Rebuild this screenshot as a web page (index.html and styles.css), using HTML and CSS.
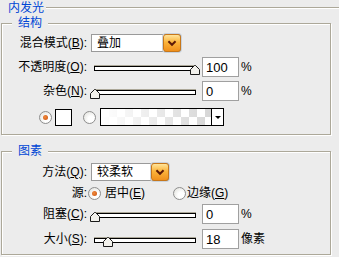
FILE: index.html
```html
<!DOCTYPE html>
<html lang="zh-CN">
<head>
  <meta charset="UTF-8" />
  <title>内发光</title>
  <link rel="stylesheet" href="styles.css">
</head>
<body>
  <div class="panel">
    <div class="panel-title">
      <span>内发光</span>
      <div class="rule"></div>
    </div>

    <fieldset class="group group-structure">
      <legend>结构</legend>

      <div class="row">
        <label class="field-label">混合模式(<u>B</u>):</label>
        <div class="select select-blend">
          <span class="select-text">叠加</span>
          <span class="select-btn">
            <svg width="18" height="18" viewBox="0 0 18 18"><path d="M5 7 L9 11 L13 7" fill="none" stroke="#5c1a08" stroke-width="2.2"/></svg>
          </span>
        </div>
      </div>

      <div class="row">
        <label class="field-label">不透明度(<u>O</u>):</label>
        <div class="slider">
          <div class="track"></div>
          <svg class="thumb" style="left: 100px" width="10" height="10" viewBox="0 0 10 10"><polygon points="0.5,9.5 0.5,4.5 4.5,0.5 5.5,0.5 9.5,4.5 9.5,9.5" fill="#f2f1ec" stroke="#1a1a1a"/></svg>
        </div>
        <input type="text" class="num" value="100">
        <span class="unit">%</span>
      </div>

      <div class="row">
        <label class="field-label">杂色(<u>N</u>):</label>
        <div class="slider">
          <div class="track"></div>
          <svg class="thumb" style="left: 0px" width="10" height="10" viewBox="0 0 10 10"><polygon points="0.5,9.5 0.5,4.5 4.5,0.5 5.5,0.5 9.5,4.5 9.5,9.5" fill="#f2f1ec" stroke="#1a1a1a"/></svg>
        </div>
        <input type="text" class="num" value="0">
        <span class="unit">%</span>
      </div>

      <div class="row row-colors">
        <span class="radio checked"></span>
        <span class="swatch"></span>
        <span class="radio radio-gap"></span>
        <div class="gradient">
          <div class="gradient-fill"></div>
          <span class="gradient-btn"></span>
        </div>
      </div>
    </fieldset>

    <fieldset class="group group-elements">
      <legend>图素</legend>

      <div class="row">
        <label class="field-label">方法(<u>Q</u>):</label>
        <div class="select select-method">
          <span class="select-text">较柔软</span>
          <span class="select-btn">
            <svg width="18" height="18" viewBox="0 0 18 18"><path d="M5 7 L9 11 L13 7" fill="none" stroke="#5c1a08" stroke-width="2.2"/></svg>
          </span>
        </div>
      </div>

      <div class="row">
        <label class="field-label">源:</label>
        <div class="options">
          <div class="option">
            <span class="radio checked"></span>
            <span class="option-text">居中(<u>E</u>)</span>
          </div>
          <div class="option option-last">
            <span class="radio"></span>
            <span class="option-text">边缘(<u>G</u>)</span>
          </div>
        </div>
      </div>

      <div class="row">
        <label class="field-label">阻塞(<u>C</u>):</label>
        <div class="slider">
          <div class="track"></div>
          <svg class="thumb" style="left: 0px" width="10" height="10" viewBox="0 0 10 10"><polygon points="0.5,9.5 0.5,4.5 4.5,0.5 5.5,0.5 9.5,4.5 9.5,9.5" fill="#f2f1ec" stroke="#1a1a1a"/></svg>
        </div>
        <input type="text" class="num" value="0">
        <span class="unit">%</span>
      </div>

      <div class="row row-size">
        <label class="field-label">大小(<u>S</u>):</label>
        <div class="slider">
          <div class="track"></div>
          <svg class="thumb" style="left: 13px" width="10" height="10" viewBox="0 0 10 10"><polygon points="0.5,9.5 0.5,4.5 4.5,0.5 5.5,0.5 9.5,4.5 9.5,9.5" fill="#f2f1ec" stroke="#1a1a1a"/></svg>
        </div>
        <input type="text" class="num" value="18">
        <span class="unit">像素</span>
      </div>
    </fieldset>
  </div>
</body>
</html>
```

FILE: styles.css
```css
body {
  margin: 0;
  background: #ececec;
  color: #000;
  font-family: "Liberation Sans", "Noto Sans CJK SC", sans-serif;
  font-size: 12px;
}

.panel {
  width: 339px;
  height: 257px;
  overflow: hidden;
}

.panel-title {
  display: flex;
  height: 14px;
}

.panel-title span {
  color: #0046d5;
  line-height: 14px;
  padding: 1px 2px 0 8px;
}

.panel-title .rule {
  flex: 1;
  margin-top: 7px;
  height: 0;
  border-top: 1px solid #aca899;
  border-bottom: 1px solid #fff;
}

/* group boxes */
.group {
  box-sizing: border-box;
  width: 330px;
  margin: 2px 0 0 1px;
  min-inline-size: 0;
  border: 1px solid #aca899;
  box-shadow: 1px 1px 0 #fff, inset 1px 1px 0 #fff;
  display: flex;
  flex-direction: column;
}

.group legend {
  margin-left: 10px;
  padding: 0 6px;
  line-height: 15px;
  height: 15px;
  color: #0046d5;
  background: #ececec;
}

.group-structure {
  padding: 2px 0 7px 0;
  gap: 4px;
}

.group-elements {
  margin-top: 9px;
  padding: 3px 0 5px 0;
  gap: 1px;
}

.row {
  display: flex;
  align-items: center;
  height: 20px;
}

.row-colors {
  margin-top: 2px;
  padding-left: 37px;
}

.row-size {
  margin-top: 4px;
}

.field-label {
  width: 85px;
  flex-shrink: 0;
  margin-right: 3px;
  text-align: right;
  line-height: 14px;
  white-space: nowrap;
}

u {
  text-decoration: underline;
  text-underline-offset: 1px;
}

/* dropdowns */
.select {
  display: flex;
  align-items: center;
  box-sizing: border-box;
  height: 18px;
  margin-left: 1px;
  background: #fff;
  border: 1px solid #9a9a9a;
}

.select-blend {
  width: 90px;
}

.select-method {
  width: 78px;
}

.select-text {
  flex: 1;
  padding-left: 5px;
  line-height: 14px;
}

.select-btn {
  box-sizing: border-box;
  width: 18px;
  height: 18px;
  margin: -1px -1px -1px 0;
  border: 1px solid #c7771a;
  border-radius: 3px;
  background: linear-gradient(#ffe49a, #fbb43c 45%, #f0901c);
  box-shadow: 0 0 0 1px #c9d2dc;
  display: flex;
  align-items: center;
  justify-content: center;
}

.select-btn svg {
  display: block;
}

/* sliders */
.slider {
  position: relative;
  width: 110px;
  height: 20px;
  padding-top: 9px;
  box-sizing: border-box;
}

.track {
  box-sizing: border-box;
  height: 5px;
  margin: 0 4px;
  background: #fff;
  border: 1px solid #000;
  box-shadow: 0 -1px 0 #aca899;
}

.thumb {
  position: absolute;
  top: 8px;
}

.num {
  box-sizing: border-box;
  width: 37px;
  height: 20px;
  margin: 0 0 0 2px;
  padding: 0 0 0 3px;
  border: 1px solid #a0a0a0;
  background: #fff;
  font-family: "Liberation Sans", sans-serif;
  font-size: 13px;
  color: #000;
  outline: none;
}

.unit {
  margin-left: 2px;
  line-height: 14px;
}

/* radios, swatch, gradient */
.radio {
  box-sizing: border-box;
  width: 13px;
  height: 13px;
  flex-shrink: 0;
  border-radius: 50%;
  border: 1px solid #8e8e8e;
  background: radial-gradient(circle at 65% 65%, #fff 30%, #dcdcd6 100%);
  position: relative;
}

.radio.checked::after {
  content: "";
  position: absolute;
  left: 3px;
  top: 3px;
  width: 5px;
  height: 5px;
  border-radius: 50%;
  background: radial-gradient(circle at 40% 40%, #f08a3c, #c9500e);
}

.swatch {
  box-sizing: border-box;
  width: 17px;
  height: 17px;
  margin-left: 3px;
  border: 1px solid #000;
  background: #fff;
}

.radio-gap {
  margin-left: 11px;
}

.gradient {
  display: flex;
  box-sizing: border-box;
  width: 124px;
  height: 18px;
  margin-left: 4px;
  border: 1px solid #000;
  background: #fff;
}

.gradient-fill {
  flex: 1;
  background:
    linear-gradient(to right, #fff, rgba(255, 255, 255, 0)),
    conic-gradient(#d6d6d6 25%, #fff 0 50%, #d6d6d6 0 75%, #fff 0) 0 0 / 16px 16px;
}

.gradient-btn {
  width: 11px;
  border-left: 1px solid #000;
  background: #fff;
  position: relative;
}

.gradient-btn::after {
  content: "";
  position: absolute;
  left: 3px;
  top: 7px;
  border-left: 3px solid transparent;
  border-right: 3px solid transparent;
  border-top: 3px solid #000;
}

.options {
  display: flex;
  align-items: center;
  margin-left: -2px;
}

.option {
  display: flex;
  align-items: center;
  width: 85px;
}

.option-last {
  width: auto;
}

.option .option-text {
  margin-left: 4px;
  line-height: 14px;
}

.option-last .option-text {
  margin-left: 1px;
}
```
